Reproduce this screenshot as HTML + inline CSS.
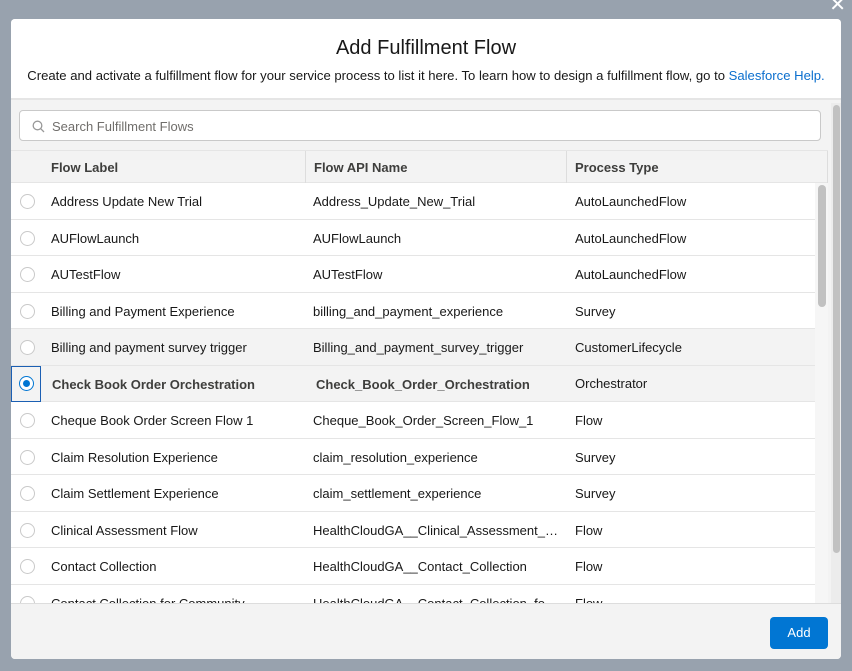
<!DOCTYPE html>
<html><head><meta charset="utf-8"><style>
*{box-sizing:border-box;margin:0;padding:0}
body{width:852px;height:671px;background:#98a2ae;position:relative;overflow:hidden;font-family:"Liberation Sans",sans-serif;color:#181818}
.modal{position:absolute;left:11px;top:19px;width:830px;height:640px;background:#f3f3f3;border-radius:4px;overflow:hidden}
.hdr{position:absolute;left:0;top:0;width:830px;height:81px;background:#fff;border-bottom:2px solid #e5e5e5;text-align:center}
.hdr h1{font-weight:normal;font-size:20px;margin-top:18px}
.hdr p{font-size:13.1px;margin-top:8px}
.hdr a{color:#0b6fce;text-decoration:none}
.search{position:absolute;left:8px;top:91px;width:802px;height:31px;background:#fff;border:1px solid #c9c9c9;border-radius:4px;font-size:13px;color:#706e6b;padding:8px 0 0 32px}
.thead{position:absolute;left:0;top:131px;width:817px;height:33px;background:#f3f3f3;border-top:1px solid #e5e5e5;border-bottom:1px solid #e5e5e5;font-weight:bold;font-size:13px;color:#3e3e3c}
.thead div{position:absolute;top:0;height:32px;padding-top:9px}
.row{position:absolute;left:0;width:804px;background:#fff;border-bottom:1px solid #e5e5e5;font-size:13px}
.row span{position:absolute;top:11px;white-space:nowrap}
.rad{position:absolute;left:9px;top:11px;width:15px;height:15px;border:1px solid #c9c9c9;border-radius:50%;background:#fff}
.ft{position:absolute;left:0;top:584px;width:830px;height:56px;background:#f3f3f3;border-top:1px solid #ddd}
.btn{position:absolute;left:759px;top:13px;width:58px;height:32px;background:#0176d3;color:#fff;border-radius:4px;font-size:13px;text-align:center;line-height:32px}
</style></head><body>
<div style="position:absolute;right:6px;top:-8px;color:#fff;font-size:20px">✕</div>
<div class="modal">
<div class="hdr"><h1>Add Fulfillment Flow</h1><p>Create and activate a fulfillment flow for your service process to list it here. To learn how to design a fulfillment flow, go to <a>Salesforce Help.</a></p></div>
<div style="position:absolute;left:820px;top:84px;width:10px;height:500px;background:#ececec"></div>
<div style="position:absolute;left:822px;top:86px;width:7px;height:448px;background:#c1c1c1;border-radius:4px"></div>
<div class="search"><svg style="position:absolute;left:12px;top:9px" width="13" height="13" viewBox="0 0 13 13"><circle cx="5.5" cy="5.5" r="4.3" fill="none" stroke="#999" stroke-width="1.3"/><line x1="8.6" y1="8.6" x2="12" y2="12" stroke="#999" stroke-width="1.3"/></svg>Search Fulfillment Flows</div>
<div class="thead"><div style="left:40px">Flow Label</div><div style="left:294px;border-left:1px solid #ddd;padding-left:8px;width:261px">Flow API Name</div><div style="left:555px;border-left:1px solid #ddd;padding-left:8px;width:262px;border-right:1px solid #ddd">Process Type</div></div>
<div style="position:absolute;left:804px;top:164px;width:13px;height:420px;background:#f6f6f6"></div>
<div style="position:absolute;left:807px;top:166px;width:8px;height:122px;background:#c1c1c1;border-radius:4px"></div>
<div id="rows"></div>
<div class="ft"><div class="btn">Add</div></div>
</div>
<script>
var d=[["Address Update New Trial","Address_Update_New_Trial","AutoLaunchedFlow"],["AUFlowLaunch","AUFlowLaunch","AutoLaunchedFlow"],["AUTestFlow","AUTestFlow","AutoLaunchedFlow"],["Billing and Payment Experience","billing_and_payment_experience","Survey"],["Billing and payment survey trigger","Billing_and_payment_survey_trigger","CustomerLifecycle"],["Check Book Order Orchestration","Check_Book_Order_Orchestration","Orchestrator"],["Cheque Book Order Screen Flow 1","Cheque_Book_Order_Screen_Flow_1","Flow"],["Claim Resolution Experience","claim_resolution_experience","Survey"],["Claim Settlement Experience","claim_settlement_experience","Survey"],["Clinical Assessment Flow","HealthCloudGA__Clinical_Assessment_…","Flow"],["Contact Collection","HealthCloudGA__Contact_Collection","Flow"],["Contact Collection for Community","HealthCloudGA__Contact_Collection_fo","Flow"]];
var h="";
d.forEach(function(r,i){var top=Math.round(164+i*36.5);var nx=Math.round(164+(i+1)*36.5);var ht=nx-top;var bg=(i==4||i==5)?"#f3f3f3":"#fff";var b=i==5;
h+='<div class="row" style="top:'+top+'px;height:'+ht+'px;background:'+bg+';'+(i==11?'height:'+(584-top)+'px;overflow:hidden;border:0':'')+'">';
if(b)h+='<div style="position:absolute;left:0;top:0;width:30px;height:36px;border:1px solid #1b5fb3"></div><div class="rad" style="left:8px;top:10px;border-color:#0176d3"><div style="position:absolute;left:3px;top:3px;width:7px;height:7px;border-radius:50%;background:#0176d3"></div></div>';
else h+='<div class="rad"></div>';
h+='<span style="left:'+(b?41:40)+'px;'+(b?'font-weight:bold;color:#3e3e3c;top:11px':'')+'">'+r[0]+'</span><span style="left:'+(b?305:302)+'px;'+(b?'font-weight:bold;color:#3e3e3c':'')+'">'+r[1]+'</span><span style="left:564px;'+(b?'top:10px':'')+'">'+r[2]+'</span></div>';});
document.getElementById("rows").innerHTML=h;
</script>
</body></html>
